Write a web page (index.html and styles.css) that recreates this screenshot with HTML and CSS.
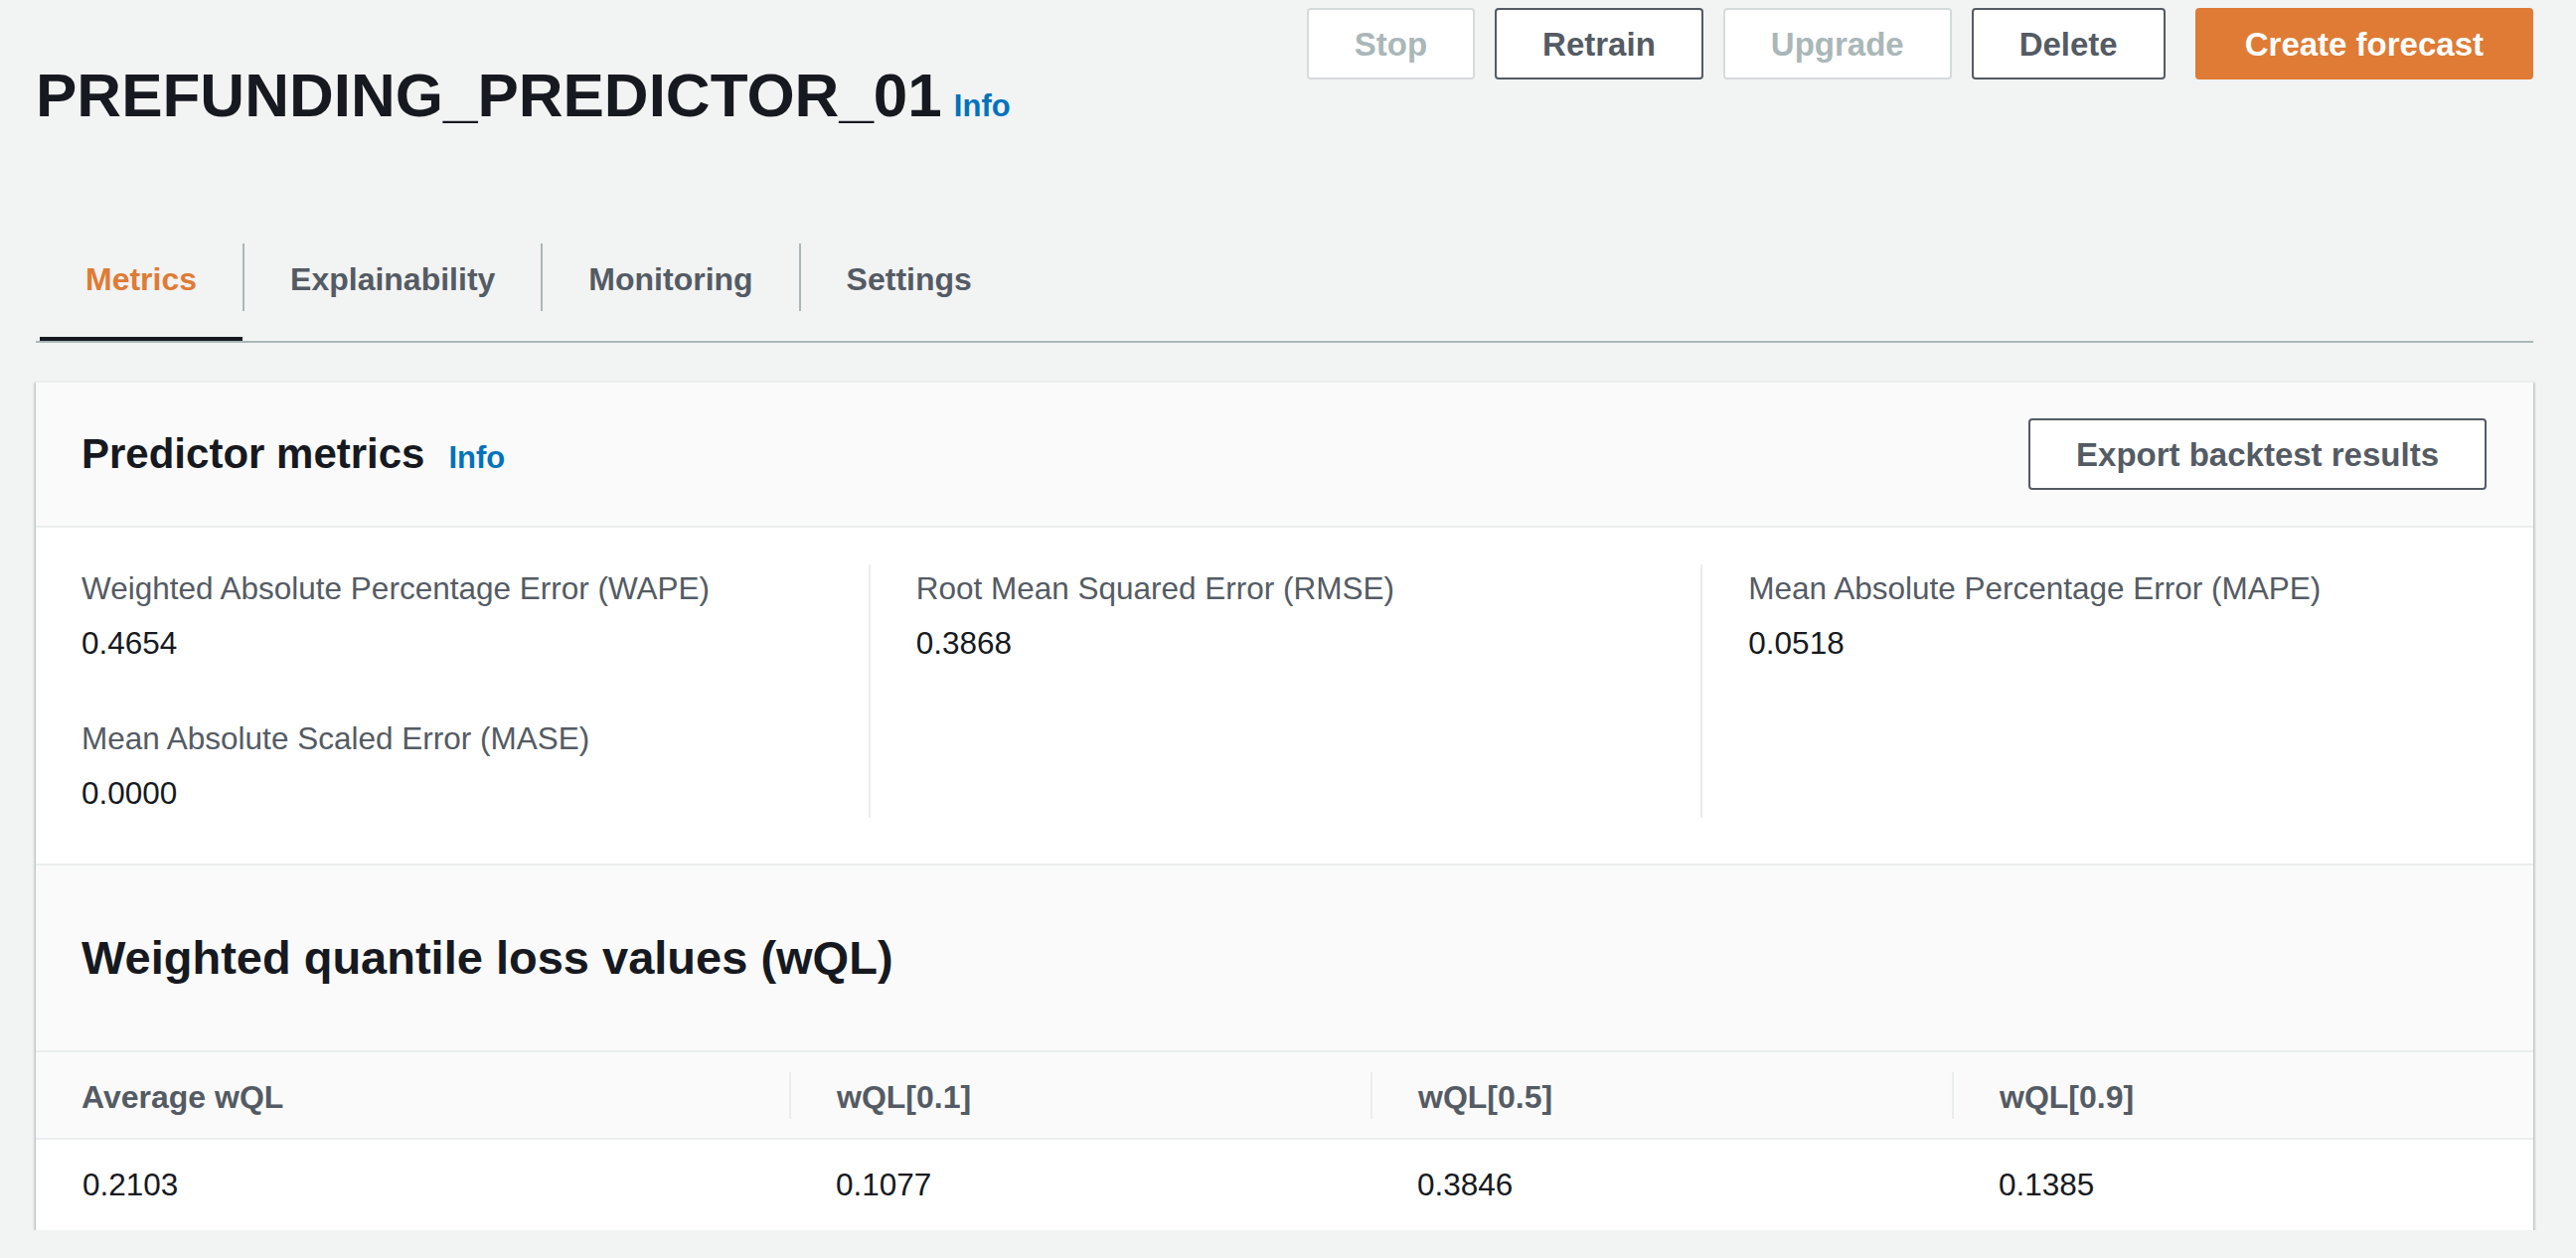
FILE: index.html
```html
<!DOCTYPE html>
<html lang="en">
<head>
<meta charset="utf-8">
<title>PREFUNDING_PREDICTOR_01</title>
<link rel="stylesheet" href="styles.css">
</head>
<body>
<div class="page">
  <header class="page-header">
    <h1 class="title">PREFUNDING_PREDICTOR_01<a class="info info-lg" href="#">Info</a></h1>
    <div class="actions">
      <button class="btn btn-disabled">Stop</button>
      <button class="btn">Retrain</button>
      <button class="btn btn-disabled">Upgrade</button>
      <button class="btn">Delete</button>
      <button class="btn btn-primary">Create forecast</button>
    </div>
  </header>

  <nav class="tabs">
    <div class="tab tab-active"><span class="tab-label">Metrics</span></div>
    <div class="tab"><span class="tab-label tab-sep">Explainability</span></div>
    <div class="tab"><span class="tab-label tab-sep">Monitoring</span></div>
    <div class="tab"><span class="tab-label tab-sep">Settings</span></div>
  </nav>

  <section class="card">
    <div class="card-header">
      <h2 class="card-title">Predictor metrics<a class="info info-md" href="#">Info</a></h2>
      <button class="btn">Export backtest results</button>
    </div>

    <div class="metrics">
      <div class="metric-col">
        <div class="metric">
          <div class="metric-label">Weighted Absolute Percentage Error (WAPE)</div>
          <div class="metric-value">0.4654</div>
        </div>
        <div class="metric">
          <div class="metric-label">Mean Absolute Scaled Error (MASE)</div>
          <div class="metric-value">0.0000</div>
        </div>
      </div>
      <div class="metric-col col-sep">
        <div class="metric">
          <div class="metric-label">Root Mean Squared Error (RMSE)</div>
          <div class="metric-value">0.3868</div>
        </div>
      </div>
      <div class="metric-col col-sep">
        <div class="metric">
          <div class="metric-label">Mean Absolute Percentage Error (MAPE)</div>
          <div class="metric-value">0.0518</div>
        </div>
      </div>
    </div>

    <div class="section-header">
      <h2 class="section-title">Weighted quantile loss values (wQL)</h2>
    </div>

    <div class="wql-table">
      <div class="wql-row wql-head">
        <div class="cell">Average wQL</div>
        <div class="cell cell-sep">wQL[0.1]</div>
        <div class="cell cell-sep">wQL[0.5]</div>
        <div class="cell cell-sep">wQL[0.9]</div>
      </div>
      <div class="wql-row wql-body">
        <div class="cell">0.2103</div>
        <div class="cell">0.1077</div>
        <div class="cell">0.3846</div>
        <div class="cell">0.1385</div>
      </div>
    </div>
  </section>
</div>
</body>
</html>
```

FILE: styles.css
```css
* {
  box-sizing: border-box;
}

html, body {
  margin: 0;
  padding: 0;
  background: #f2f3f3;
}

body {
  font-family: "Liberation Sans", Arial, sans-serif;
  color: #16191f;
}

.page {
  padding: 0 43px 0 36px;
}

/* Header */
.page-header {
  display: flex;
  justify-content: space-between;
  align-items: flex-start;
}

.title {
  margin: 56px 0 0 0;
  font-size: 62px;
  line-height: 80px;
  font-weight: 700;
  color: #16191f;
}

.info {
  color: #0073bb;
  text-decoration: none;
  font-weight: 700;
  line-height: 1;
}

.info-lg {
  font-size: 31px;
  margin-left: 12px;
}

.info-md {
  font-size: 31px;
  margin-left: 24px;
}

.actions {
  display: flex;
  gap: 20px;
  margin-top: 8px;
}

.btn {
  height: 72px;
  padding: 0 46px;
  border: 2px solid #545b64;
  border-radius: 4px;
  background: #ffffff;
  color: #545b64;
  font-family: "Liberation Sans", Arial, sans-serif;
  font-size: 33px;
  font-weight: 700;
  line-height: 1;
  cursor: pointer;
}

.btn-disabled {
  border-color: #d5dbdb;
  color: #aab7b8;
}

.btn-primary {
  margin-left: 10px;
  background: #df7b34;
  border-color: #df7b34;
  color: #ffffff;
  padding: 0 48px;
}

/* Tabs */
.tabs {
  display: flex;
  margin-top: 109px;
  padding-left: 4px;
  border-bottom: 2px solid #aab7b8;
}

.tab {
  padding-bottom: 26px;
  border-bottom: 4px solid transparent;
}

.tab-active {
  border-bottom-color: #16191f;
}

.tab-label {
  display: flex;
  align-items: center;
  height: 68px;
  padding: 4px 46px 0;
  font-size: 32px;
  font-weight: 700;
  color: #545b64;
}

.tab-active .tab-label {
  color: #df7b34;
}

.tab-sep {
  border-left: 2px solid #aab7b8;
}

/* Card */
.card {
  margin-top: 38px;
  background: #ffffff;
  border-top: 2px solid #eaeded;
  box-shadow: 0 2px 2px 0 rgba(0, 28, 36, 0.3),
              2px 2px 2px 0 rgba(0, 28, 36, 0.12),
              -2px 2px 2px 0 rgba(0, 28, 36, 0.12);
}

.card-header {
  display: flex;
  justify-content: space-between;
  align-items: center;
  height: 146px;
  padding: 0 47px 0 46px;
  background: #fafafa;
  border-bottom: 2px solid #eaeded;
}

.card-title {
  margin: 0;
  font-size: 42px;
  line-height: 48px;
  font-weight: 700;
  color: #16191f;
}

/* Metrics */
.metrics {
  display: grid;
  grid-template-columns: 1fr 1fr 1fr;
  padding: 37px 0 46px;
  border-bottom: 2px solid #eaeded;
}

.metric-col {
  display: flex;
  flex-direction: column;
  gap: 48px;
  padding: 0 46px;
  min-height: 255px;
}

.col-sep {
  border-left: 2px solid #eaeded;
}

.metric-label {
  font-size: 31.5px;
  line-height: 48px;
  color: #545b64;
}

.metric-value {
  margin-top: 7px;
  font-size: 31.5px;
  line-height: 48px;
  color: #16191f;
}

/* wQL section */
.section-header {
  display: flex;
  align-items: center;
  height: 188px;
  padding: 0 46px;
  background: #fafafa;
  border-bottom: 2px solid #eaeded;
}

.section-title {
  margin: 0;
  font-size: 47px;
  line-height: 56px;
  font-weight: 700;
  color: #16191f;
}

.wql-row {
  display: grid;
  grid-template-columns: 758fr 585fr 585fr 585fr;
  align-items: center;
}

.wql-head {
  height: 88px;
  background: #fafafa;
  border-bottom: 2px solid #eaeded;
}

.wql-body {
  height: 91px;
}

.cell {
  padding-left: 46px;
  font-size: 31.5px;
  line-height: 43px;
}

.wql-head .cell {
  padding-top: 4px;
  font-size: 32px;
  font-weight: 700;
  color: #545b64;
}

.wql-head .cell-sep {
  border-left: 2px solid #eaeded;
}

.wql-body .cell {
  padding-left: 47px;
  color: #16191f;
}
```
